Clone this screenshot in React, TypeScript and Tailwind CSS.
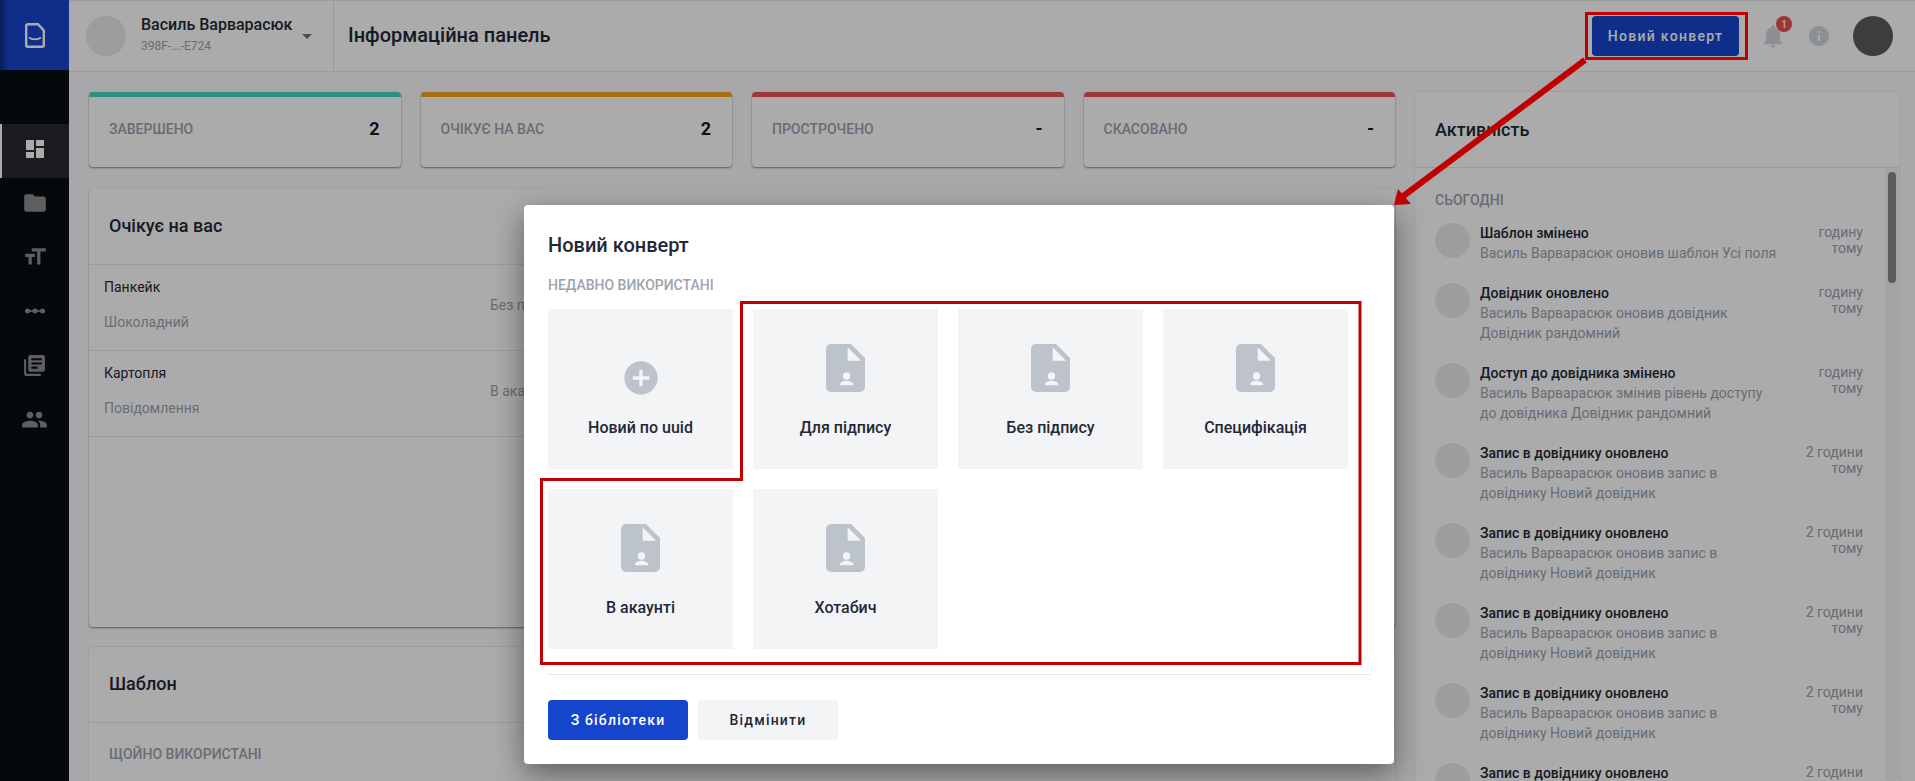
import React from 'react';
import { MdDashboard, MdFolder, MdFormatSize, MdLibraryBooks, MdPeople, MdNotifications, MdInfo, MdAddCircle, MdArrowDropDown } from 'react-icons/md';

const stats = [
  { label: 'ЗАВЕРШЕНО', value: '2', bar: 'bg-[#41d9c4]' },
  { label: 'ОЧІКУЄ НА ВАС', value: '2', bar: 'bg-[#f9a51a]' },
  { label: 'ПРОСТРОЧЕНО', value: '-', bar: 'bg-[#ef4f4f]' },
  { label: 'СКАСОВАНО', value: '-', bar: 'bg-[#ef4f4f]' },
];

const rows = [
  { title: 'Панкейк', sub: 'Шоколадний', note: 'Без підпису' },
  { title: 'Картопля', sub: 'Повідомлення', note: 'В акаунті' },
];

const recordDesc = 'Василь Варварасюк оновив запис в довіднику Новий довідник';

const activity = [
  { title: 'Шаблон змінено', desc: 'Василь Варварасюк оновив шаблон Усі поля', time: 'годину тому' },
  { title: 'Довідник оновлено', desc: 'Василь Варварасюк оновив довідник Довідник рандомний', time: 'годину тому' },
  { title: 'Доступ до довідника змінено', desc: 'Василь Варварасюк змінив рівень доступу до довідника Довідник рандомний', time: 'годину тому' },
  { title: 'Запис в довіднику оновлено', desc: recordDesc, time: '2 години тому' },
  { title: 'Запис в довіднику оновлено', desc: recordDesc, time: '2 години тому' },
  { title: 'Запис в довіднику оновлено', desc: recordDesc, time: '2 години тому' },
  { title: 'Запис в довіднику оновлено', desc: recordDesc, time: '2 години тому' },
  { title: 'Запис в довіднику оновлено', desc: recordDesc, time: '2 години тому' },
];

const templates = ['Для підпису', 'Без підпису', 'Специфікація', 'В акаунті', 'Хотабич'];

function Logo() {
  return (
    <svg width="20" height="25" viewBox="0 0 20 25" fill="none" stroke="#ffffff" strokeWidth="2.4">
      <path d="M2.5 1.2H13L18.8 7.5V22.3A1.5 1.5 0 0 1 17.3 23.8H2.7A1.5 1.5 0 0 1 1.2 22.3V2.5A1.5 1.5 0 0 1 2.5 1.2Z" />
      <path d="M4 14.5C7 17 13 17 16 14.5" strokeWidth="1.8" />
    </svg>
  );
}

function ConnectedDots() {
  return (
    <svg width="20" height="8" viewBox="0 0 20 8" fill="#8e8e8e">
      <rect x="1" y="3.2" width="18" height="1.6" />
      <circle cx="2.5" cy="4" r="2.5" />
      <circle cx="10" cy="4" r="2.5" />
      <circle cx="17.5" cy="4" r="2.5" />
    </svg>
  );
}

function DocIcon() {
  return (
    <svg width="39" height="48" viewBox="0 0 39 48">
      <path d="M5 0H25L39 14V43A5 5 0 0 1 34 48H5A5 5 0 0 1 0 43V5A5 5 0 0 1 5 0Z" fill="#bdc3cb" />
      <path d="M21.7 3.3L35 16.7H21.7Z" fill="#f3f4f6" />
      <circle cx="20.5" cy="32" r="3.7" fill="#f3f4f6" />
      <path d="M14 41.3V40.5C14 38 18 36.8 20.5 36.8C23 36.8 27.2 38 27.2 40.5V41.3Z" fill="#f3f4f6" />
    </svg>
  );
}

function Sidebar() {
  return (
    <aside className="flex h-full w-[69px] shrink-0 flex-col bg-[#080e14]">
      <div className="flex h-[70px] items-center justify-center bg-linear-to-r from-[#0d2a80] from-0% to-[#1645cd] to-[12%]">
        <Logo />
      </div>
      <nav className="mt-[54px] flex flex-col text-[#8e8e8e]">
        <div className="flex h-[54px] items-center justify-center border-l-2 border-white bg-[#272a30] pb-[4px] pr-[2px] text-white">
          <MdDashboard size={24} />
        </div>
        <div className="flex h-[54px] items-center justify-center pb-[4px]"><MdFolder size={26} /></div>
        <div className="flex h-[54px] items-center justify-center pb-[4px]"><MdFormatSize size={26} /></div>
        <div className="flex h-[54px] items-center justify-center pb-[4px]"><ConnectedDots /></div>
        <div className="flex h-[54px] items-center justify-center pb-[4px]"><MdLibraryBooks size={25} /></div>
        <div className="flex h-[54px] items-center justify-center pb-[4px]"><MdPeople size={27} /></div>
      </nav>
    </aside>
  );
}

function Header() {
  return (
    <header className="flex h-[72px] shrink-0 items-center border-b border-t border-[#e5e7eb] bg-white">
      <div className="flex h-full w-[265px] items-center border-r border-[#e5e7eb] pl-[17px]">
        <div className="h-10 w-10 rounded-full bg-[#ebebed]" />
        <div className="mb-[4px] ml-[15px]">
          <div className="text-[16px] font-medium leading-[20px] text-[#1f2937]">Василь Варварасюк</div>
          <div className="mt-[4px] text-[12px] leading-[14px] text-[#9ca3af]">398F-...-E724</div>
        </div>
        <MdArrowDropDown size={24} className="ml-[3px] text-[#6b7280]" />
      </div>
      <h1 className="mb-[2px] ml-[14px] text-[20px] font-medium text-[#1f2937]">Інформаційна панель</h1>
      <div className="ml-auto flex items-center pr-[22px]">
        <button className="h-10 w-[147px] rounded bg-[#1645cd] text-[14px] font-medium tracking-[1.3px] text-white">Новий конверт</button>
        <div className="relative ml-[18px] flex h-10 w-8 items-center justify-center text-[#d1d5db]">
          <MdNotifications size={28} />
          <span className="absolute -right-[3px] top-0 flex h-4 w-4 items-center justify-center rounded-full bg-[#ef4f4f] text-[10px] font-medium text-white">1</span>
        </div>
        <MdInfo size={24} className="ml-[18px] text-[#d1d5db]" />
        <div className="ml-[22px] h-10 w-10 rounded-full bg-[#5b5b5b]" />
      </div>
    </header>
  );
}

function Stats() {
  return (
    <div className="grid grid-cols-4 gap-5">
      {stats.map((s) => (
        <div key={s.label} className="h-[75px] overflow-hidden rounded bg-white shadow-[0_1px_2px_rgba(0,0,0,0.45)]">
          <div className={`h-[5px] ${s.bar}`} />
          <div className="flex items-center justify-between pl-5 pr-[21px] pt-[21px]">
            <span className="text-[14px] font-medium leading-[22px] text-[#9ca3af]">{s.label}</span>
            <span className="text-[18px] font-bold leading-[22px] text-[#111827]">{s.value}</span>
          </div>
        </div>
      ))}
    </div>
  );
}

function PendingPanel() {
  return (
    <section className="mt-[22px] h-[438px] shrink-0 rounded bg-white shadow-[0_1px_2px_rgba(0,0,0,0.45)]">
      <div className="flex h-[76px] items-center border-b border-[#e5e7eb] pb-[2px] pl-5 text-[18px] font-medium text-[#1f2937]">Очікує на вас</div>
      {rows.map((r) => (
        <div key={r.title} className="flex h-[86px] items-center border-b border-[#e5e7eb] pl-[15px]">
          <div className="mb-[6px] w-[386px]">
            <div className="text-[14px] leading-[20px] text-[#1f2937]">{r.title}</div>
            <div className="mt-[15px] text-[14px] leading-[20px] text-[#9ca3af]">{r.sub}</div>
          </div>
          <div className="mb-[4px] text-[14px] text-[#9ca3af]">{r.note}</div>
        </div>
      ))}
    </section>
  );
}

function TemplatePanel() {
  return (
    <section className="mt-5 flex-1 rounded-t bg-white shadow-[0_0_2px_rgba(0,0,0,0.2)]">
      <div className="flex h-[76px] items-center border-b border-[#e5e7eb] pb-[2px] pl-5 text-[18px] font-medium text-[#1f2937]">Шаблон</div>
      <div className="pl-5 pt-[21px] text-[14px] font-medium text-[#9ca3af]">ЩОЙНО ВИКОРИСТАНІ</div>
    </section>
  );
}

function ActivityPanel() {
  return (
    <section className="relative flex h-full w-[484px] shrink-0 flex-col overflow-hidden rounded-t bg-white shadow-[0_0_2px_rgba(0,0,0,0.2)]">
      <div className="flex h-[76px] shrink-0 items-center border-b border-[#e5e7eb] pl-5 text-[18px] font-medium text-[#1f2937]">Активність</div>
      <div className="pl-5 pt-[22px]">
        <div className="text-[14px] font-medium leading-[20px] text-[#9ca3af]">СЬОГОДНІ</div>
        <div className="mt-[13px] flex flex-col gap-5">
          {activity.map((a, i) => (
            <div key={i} className="flex">
              <div className="h-[35px] w-[35px] shrink-0 rounded-full bg-[#ebebed]" />
              <div className="ml-[10px] w-[313px]">
                <div className="text-[14px] font-medium leading-[20px] text-[#1f2937]">{a.title}</div>
                <div className="w-[300px] text-[14px] leading-[20px] text-[#9ca3af]">{a.desc}</div>
              </div>
              <div className="w-[70px] pt-[1px] text-right text-[14px] leading-[16px] text-[#9ca3af]">{a.time}</div>
            </div>
          ))}
        </div>
      </div>
      <div className="absolute bottom-0 right-[1px] top-[76px] w-[13px] rounded bg-[#f4f4f6]">
        <div className="mx-auto mt-[4px] h-[111px] w-2 rounded bg-[#8a8a8a]" />
      </div>
    </section>
  );
}

function Modal() {
  return (
    <div className="absolute left-[524px] top-[205px] h-[559px] w-[870px] rounded bg-white px-6 pt-6 shadow-[0_10px_30px_rgba(0,0,0,0.45)]">
      <h2 className="text-[20px] font-medium leading-[32px] text-[#1f2937]">Новий конверт</h2>
      <div className="mt-[12px] text-[14px] font-medium leading-[24px] text-[#9ca3af]">НЕДАВНО ВИКОРИСТАНІ</div>
      <div className="mt-[12px] grid w-[800px] grid-cols-[repeat(4,185px)] gap-5">
        <div className="flex h-40 flex-col items-center bg-[#f3f4f6] pt-[49px]">
          <MdAddCircle size={40} className="text-[#bdc3cb]" />
          <span className="mt-[18px] text-[16px] font-medium leading-[24px] text-[#1f2937]">Новий по uuid</span>
        </div>
        {templates.map((t) => (
          <div key={t} className="flex h-40 flex-col items-center bg-[#f3f4f6] pt-[35px]">
            <DocIcon />
            <span className="mt-[24px] text-[16px] font-medium leading-[24px] text-[#1f2937]">{t}</span>
          </div>
        ))}
      </div>
      <div className="mt-[25px] w-[822px] border-t border-[#e5e7eb] pt-[25px]">
        <div className="flex gap-[10px]">
          <button className="h-10 w-[140px] rounded bg-[#1645cd] text-[14px] font-medium tracking-[1.2px] text-white">З бібліотеки</button>
          <button className="h-10 w-[140px] rounded bg-[#f3f4f6] text-[14px] font-medium tracking-[1.2px] text-[#1f2937]">Відмінити</button>
        </div>
      </div>
    </div>
  );
}

function Annotations() {
  return (
    <svg className="pointer-events-none absolute inset-0" width="1915" height="781" fill="none" stroke="#c00000" strokeWidth="3">
      <rect x="1586.5" y="13.5" width="160" height="45" />
      <path d="M1360 302.5H741.5V479.5H541.5V663.5H1360Z M1360 301V665" />
      <path d="M1585 60L1402 197" strokeWidth="6" />
      <path d="M1394 205L1398 189L1411 204Z" fill="#c00000" stroke="none" />
    </svg>
  );
}

export default function App() {
  return (
    <div className="relative flex h-[781px] w-[1915px] overflow-hidden bg-[#fbfbfe] font-['Roboto',sans-serif]">
      <Sidebar />
      <main className="flex h-full min-w-0 flex-1 flex-col">
        <Header />
        <div className="flex min-h-0 flex-1 gap-5 pl-5 pt-5">
          <div className="flex h-full w-[1306px] shrink-0 flex-col">
            <Stats />
            <PendingPanel />
            <TemplatePanel />
          </div>
          <ActivityPanel />
        </div>
      </main>
      <div className="absolute inset-0 bg-[rgba(0,0,0,0.33)]" />
      <Modal />
      <Annotations />
    </div>
  );
}
